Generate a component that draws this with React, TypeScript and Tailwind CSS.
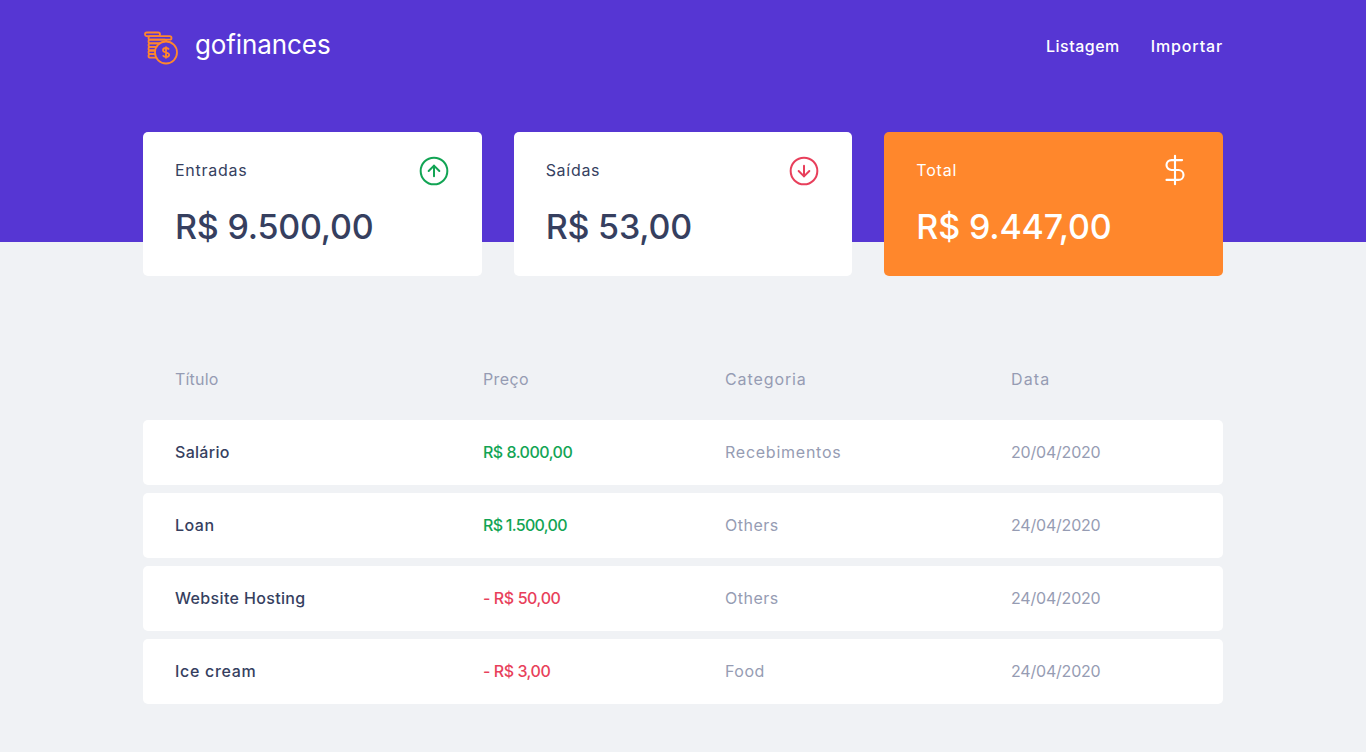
import { CircleArrowDown, CircleArrowUp, DollarSign } from 'lucide-react';
import React from 'react';

type RowType = {
  title: string;
  titleClass: string;
  price: string;
  priceClass: string;
  income: boolean;
  category: string;
  categoryClass: string;
  date: string;
};

const rows: RowType[] = [
  {
    title: 'Salário',
    titleClass: 'tracking-[0.3px]',
    price: 'R$ 8.000,00',
    priceClass: 'tracking-[-0.5px]',
    income: true,
    category: 'Recebimentos',
    categoryClass: 'tracking-[0.75px]',
    date: '20/04/2020',
  },
  {
    title: 'Loan',
    titleClass: 'tracking-[0.5px]',
    price: 'R$ 1.500,00',
    priceClass: 'tracking-[-0.7px]',
    income: true,
    category: 'Others',
    categoryClass: 'tracking-[0.5px]',
    date: '24/04/2020',
  },
  {
    title: 'Website Hosting',
    titleClass: 'tracking-[0.35px]',
    price: '- R$ 50,00',
    priceClass: 'tracking-[-0.4px]',
    income: false,
    category: 'Others',
    categoryClass: 'tracking-[0.5px]',
    date: '24/04/2020',
  },
  {
    title: 'Ice cream',
    titleClass: 'tracking-[0.7px]',
    price: '- R$ 3,00',
    priceClass: 'tracking-[-0.45px]',
    income: false,
    category: 'Food',
    categoryClass: 'tracking-[0.5px]',
    date: '24/04/2020',
  },
];

function Logo() {
  return (
    <svg width="36" height="34" viewBox="0 0 36 34" fill="none" stroke="#ff872c" strokeWidth="1.8" className="mt-[2px]">
      <rect x="2" y="1.500" width="15" height="3.600" rx="1.800" />
      <rect x="5.500" y="5.100" width="23" height="3.600" rx="1.800" />
      <rect x="5.500" y="8.700" width="18" height="3.600" rx="1.800" />
      <rect x="5.500" y="12.300" width="14" height="3.600" rx="1.800" />
      <rect x="5.500" y="15.900" width="12" height="3.600" rx="1.800" />
      <rect x="5.500" y="19.500" width="11" height="3.600" rx="1.800" />
      <rect x="5.500" y="23.100" width="12" height="3.600" rx="1.800" />
      <circle cx="23" cy="21.500" r="11" fill="#5636d3" />
      <path d="M26 18.500c-.6-1-1.600-1.500-3-1.500-1.700 0-3 .9-3 2.200 0 3 6.200 1.600 6.200 4.600 0 1.300-1.400 2.200-3.200 2.200-1.400 0-2.600-.6-3.200-1.600M23 15.500v12" />
    </svg>
  );
}

function Card({
  label,
  labelClass,
  value,
  valueClass,
  icon,
  total,
}: {
  label: string;
  labelClass: string;
  value: string;
  valueClass: string;
  icon: React.ReactNode;
  total?: boolean;
}) {
  return (
    <div className={`h-36 rounded-[5px] px-8 pt-[22px] ${total ? 'bg-[#ff872c] text-white' : 'bg-white text-[#363f5f]'}`}>
      <div className="flex h-[34px] items-center justify-between">
        <p className={`pb-[2px] text-base ${labelClass}`}>{label}</p>
        {icon}
      </div>
      <p className={`mt-[12px] text-[34px] leading-[54px] font-medium ${valueClass}`}>{value}</p>
    </div>
  );
}

export default function App() {
  return (
    <div className="min-h-[752px] bg-[#f0f2f5] font-['Inter',sans-serif]">
      <header className="h-[242px] bg-[#5636d3]">
        <div className="mx-auto flex w-[1080px] items-start justify-between pt-7">
          <div className="flex items-center gap-4">
            <Logo />
            <span className="pb-[3px] text-[26px] leading-[34px] tracking-[-0.1px] text-white">gofinances</span>
          </div>
          <nav className="flex gap-[31px] pt-[6px] text-base leading-6 font-medium text-white">
            <a className="tracking-[0.5px]">Listagem</a>
            <a className="tracking-[0.85px]">Importar</a>
          </nav>
        </div>
      </header>

      <main className="mx-auto w-[1080px]">
        <section className="-mt-[110px] grid grid-cols-3 gap-8">
          <Card
            label="Entradas"
            labelClass="tracking-[0.75px]"
            value="R$ 9.500,00"
            valueClass="tracking-[-0.2px]"
            icon={<CircleArrowUp size={32} strokeWidth={1.5} className="-mt-px text-[#12a454]" />}
          />
          <Card
            label="Saídas"
            labelClass="tracking-[0.7px]"
            value="R$ 53,00"
            valueClass="tracking-[-0.2px]"
            icon={<CircleArrowDown size={32} strokeWidth={1.5} className="-mt-px text-[#e83f5b]" />}
          />
          <Card
            total
            label="Total"
            labelClass="tracking-[0.8px]"
            value="R$ 9.447,00"
            valueClass="tracking-[-0.15px]"
            icon={<DollarSign size={34} strokeWidth={1.5} className="-mt-[2px] -mr-px text-white" />}
          />
        </section>

        <section className="mt-[91px]">
          <div className="grid grid-cols-[308px_242px_286px_244px] text-base leading-6 text-[#969cb3]">
            <span className="pl-8 tracking-[0.2px]">Título</span>
            <span className="pl-8 tracking-[0.4px]">Preço</span>
            <span className="pl-8 tracking-[0.9px]">Categoria</span>
            <span className="pl-8 tracking-[1.1px]">Data</span>
          </div>
          <ul className="mt-[29px] flex flex-col gap-2">
            {rows.map((row) => (
              <li
                key={row.title}
                className="grid h-[65px] grid-cols-[308px_242px_286px_244px] items-center rounded-[5px] bg-white pb-[2px] text-base text-[#969cb3]"
              >
                <span className={`pl-8 font-medium text-[#363f5f] ${row.titleClass}`}>{row.title}</span>
                <span className={`pl-8 font-medium ${row.priceClass} ${row.income ? 'text-[#12a454]' : 'text-[#e83f5b]'}`}>
                  {row.price}
                </span>
                <span className={`pl-8 ${row.categoryClass}`}>{row.category}</span>
                <span className="pl-8 tracking-[-0.2px]">{row.date}</span>
              </li>
            ))}
          </ul>
        </section>
      </main>
    </div>
  );
}
